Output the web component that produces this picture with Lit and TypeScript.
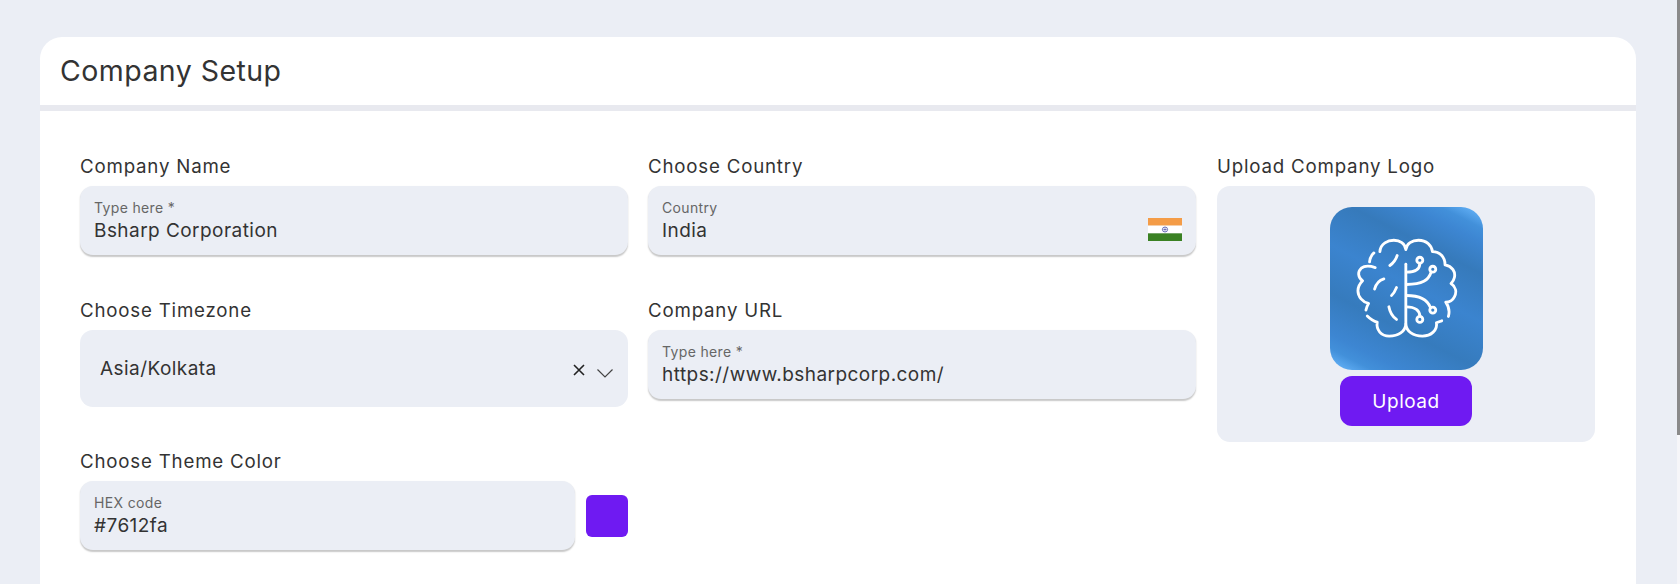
import { LitElement, html, css, svg } from "lit";
import { customElement } from "lit/decorators.js";

const brain = svg`
<svg class="brain" viewBox="88 50 460 490" fill="none" stroke="#fff" stroke-width="8.5" stroke-linecap="round" stroke-linejoin="round">
  <path d="M238 184 C240 160 262 150 280 150 C298 150 314 160 316 178 C318 160 335 150 354 150 C378 150 394 165 396 184 C418 184 434 200 434 224 C456 228 466 245 462 262 C460 272 456 276 452 280 C466 290 470 305 462 320 C456 332 446 336 436 336 C446 350 448 365 444 379"/>
  <path d="M424 392 C416 394 412 396 408 398 C412 420 392 438 366 438 C338 438 318 425 316 402 C314 425 294 438 266 438 C242 438 226 420 230 396 C218 394 208 386 200 378"/>
  <path d="M196 360 C198 352 200 346 204 340 C186 336 172 320 172 302 C172 290 178 280 186 272 C172 262 170 245 182 234 C192 226 206 226 224 232"/>
  <path d="M207 215 C208 205 212 195 220 188"/>
  <path d="M290 196 C286 208 280 218 268 226"/>
  <path d="M250 266 C236 270 226 282 222 297"/>
  <path d="M288 292 C284 302 280 310 273 316"/>
  <path d="M265 350 C268 366 276 380 288 388"/>
  <path d="M316 222 V402"/>
  <circle cx="358" cy="210" r="9"/>
  <path d="M358 220 C358 236 344 246 318 246"/>
  <circle cx="397" cy="237" r="9"/>
  <path d="M392 246 C384 270 366 283 318 283"/>
  <circle cx="397" cy="360" r="9"/>
  <path d="M318 316 C356 316 380 326 390 352"/>
  <circle cx="358" cy="388" r="9"/>
  <path d="M318 350 C344 350 358 362 358 378"/>
</svg>`;

const flag = svg`
<svg class="flag" viewBox="0 0 34 24" preserveAspectRatio="none" aria-hidden="true">
  <rect width="34" height="8" fill="#f49c47"/>
  <rect y="8" width="34" height="8" fill="#ffffff"/>
  <rect y="16" width="34" height="8" fill="#3a8123"/>
  <circle cx="17" cy="12" r="2.6" fill="none" stroke="#5a5fb0" stroke-width="0.9"/>
  <circle cx="17" cy="12" r="0.8" fill="#5a5fb0"/>
  <path d="M14.6 12H19.4M17 9.6V14.4" stroke="#5a5fb0" stroke-width="0.5"/>
</svg>`;

@customElement("app-root")
export class AppRoot extends LitElement {
  static styles = css`
    :host {
      display: block;
      height: 584px;
      overflow: hidden;
      background: #ebeef5;
      font-family: Inter, "Noto Sans", sans-serif;
      color: #333;
      position: relative;
    }
    .page {
      padding: 37px 44px 0 40px;
    }
    .card {
      background: #fff;
      border-radius: 22px 22px 0 0;
      height: 547px;
    }
    .head {
      height: 68px;
      box-sizing: border-box;
      padding: 16px 0 0 20px;
      font-size: 28.5px;
      letter-spacing: 0.45px;
      line-height: 36px;
      font-weight: 400;
      color: #333;
    }
    .rule {
      height: 6px;
      background: #e8e9ef;
    }
    .body {
      display: grid;
      grid-template-columns: 548px 548px 379px;
      column-gap: 20px;
      padding: 44px 40px 0;
      align-items: start;
    }
    .field-wrap {
      display: flex;
      flex-direction: column;
    }
    .label {
      font-size: 18.7px;
      letter-spacing: 0.8px;
      line-height: 24px;
      height: 24px;
      margin-bottom: 7px;
      color: #333;
    }
    .box {
      background: #ebeef5;
      border-radius: 13px;
      box-shadow: 0 1.5px 1.5px rgba(0, 0, 0, 0.22);
      height: 69px;
      box-sizing: border-box;
      padding: 13px 14px 0;
      position: relative;
    }
    .hint {
      font-size: 14px;
      letter-spacing: 0.35px;
      line-height: 17px;
      color: #666;
    }
    .val {
      font-size: 19px;
      letter-spacing: 0.45px;
      line-height: 24px;
      margin-top: 3px;
      color: #333;
    }
    .flag {
      position: absolute;
      right: 14px;
      top: 32px;
      width: 34px;
      height: 23px;
    }
    .select {
      background: #ebeef5;
      border-radius: 13px;
      height: 77px;
      display: flex;
      align-items: center;
      padding: 0 15px 0 20px;
      box-sizing: border-box;
    }
    .select .val {
      flex: 1;
      margin: 0;
    }
    .x { width: 12px; height: 12px; margin-right: 12px; margin-top: 3px; }
    .chev { width: 16px; height: 9px; margin-top: 9px; }
    .row2 { margin-top: 44px; }
    .row3 { margin-top: 43px; }
    .upload-col { grid-column: 3; grid-row: 1 / span 3; margin-left: 1px; }
    .upload {
      background: #ebeef5;
      border-radius: 13px;
      height: 256px;
      box-sizing: border-box;
      padding-top: 21px;
      display: flex;
      flex-direction: column;
      align-items: center;
    }
    .logo {
      width: 153px;
      height: 163px;
      border-radius: 22px;
      background: linear-gradient(27deg, #68b6fb 0%, #5aa8ef 4%, #4290da 9%, #3d86d2 15%, #367bbd 32%, #3b84cf 52%, #367abb 72%, #3d86d2 85%, #4290da 91%, #5aa8ef 96%, #68b6fb 100%);
    }
    .brain { width: 153px; height: 163px; display: block; }
    .btn {
      margin-top: 6px;
      width: 132px;
      height: 50px;
      border-radius: 12px;
      background: #6f1af2;
      color: #fff;
      display: flex;
      align-items: center;
      justify-content: center;
      font-size: 19px;
      letter-spacing: 0.5px;
    }
    .theme { display: flex; align-items: center; gap: 11px; }
    .theme .box { flex: 1; }
    .swatch {
      width: 42px;
      height: 42px;
      border-radius: 6px;
      background: #6f1af2;
      flex: none;
    }
    .theme-row { grid-column: 1; }
    .track {
      position: absolute;
      right: 0;
      top: 0;
      bottom: 0;
      width: 3px;
      background: #f6f6f9;
    }
    .thumb {
      height: 435px;
      background: #8a8a8a;
    }
  `;

  render() {
    return html`
      <div class="page">
        <div class="card">
          <div class="head">Company Setup</div>
          <div class="rule"></div>
          <div class="body">
            <div class="field-wrap">
              <div class="label">Company Name</div>
              <div class="box"><div class="hint">Type here *</div><div class="val">Bsharp Corporation</div></div>
            </div>
            <div class="field-wrap">
              <div class="label">Choose Country</div>
              <div class="box"><div class="hint">Country</div><div class="val">India</div>${flag}</div>
            </div>
            <div class="upload-col field-wrap">
              <div class="label">Upload Company Logo</div>
              <div class="upload">
                <div class="logo">${brain}</div>
                <div class="btn">Upload</div>
              </div>
            </div>
            <div class="field-wrap row2">
              <div class="label">Choose Timezone</div>
              <div class="select">
                <div class="val">Asia/Kolkata</div>
                <svg class="x" viewBox="0 0 12 12" fill="none" stroke="#222" stroke-width="1.6"><path d="M1 1L11 11M11 1L1 11"/></svg>
                <svg class="chev" viewBox="0 0 16 9" fill="none" stroke="#444" stroke-width="1.2"><path d="M0.5 0.5L8 8L15.5 0.5"/></svg>
              </div>
            </div>
            <div class="field-wrap row2">
              <div class="label">Company URL</div>
              <div class="box"><div class="hint">Type here *</div><div class="val">https://www.bsharpcorp.com/</div></div>
            </div>
            <div class="field-wrap row3 theme-row">
              <div class="label">Choose Theme Color</div>
              <div class="theme">
                <div class="box"><div class="hint">HEX code</div><div class="val">#7612fa</div></div>
                <div class="swatch"></div>
              </div>
            </div>
          </div>
        </div>
      </div>
      <div class="track"><div class="thumb"></div></div>
    `;
  }
}
